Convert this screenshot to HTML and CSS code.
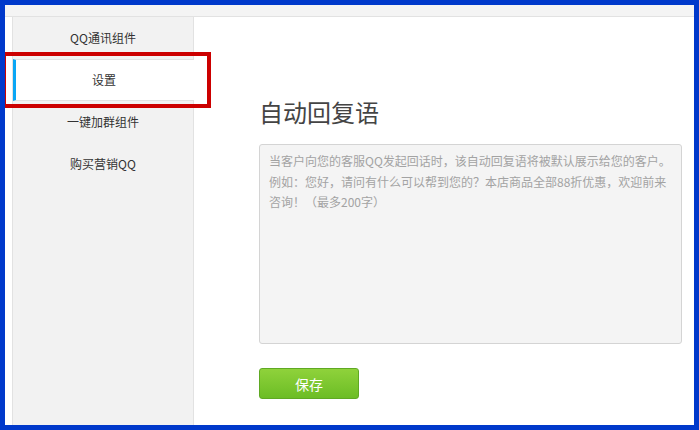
FILE: index.html
```html
<!DOCTYPE html>
<html lang="zh-CN">

<head>
  <meta charset="UTF-8" />
  <meta name="viewport" content="width=device-width, initial-scale=1.0" />
  <title>自动回复语设置</title>
  <link rel="stylesheet" href="styles.css">
</head>

<body>
  <div class="frame">
    <div class="topbar"></div>
    <div class="layout">
      <ul class="side-nav">
        <li>QQ通讯组件</li>
        <li class="active">设置</li>
        <li>一键加群组件</li>
        <li>购买营销QQ</li>
      </ul>
      <div class="main">
        <h2 class="main-title">自动回复语</h2>
        <textarea class="reply-box" placeholder="当客户向您的客服QQ发起回话时，该自动回复语将被默认展示给您的客户。例如：您好，请问有什么可以帮到您的？本店商品全部88折优惠，欢迎前来咨询！（最多200字）"></textarea>
        <button class="btn-save">保存</button>
      </div>
    </div>
    <div class="mark"></div>
  </div>
</body>

</html>
```

FILE: styles.css
```css
* {
  box-sizing: border-box;
}

body {
  margin: 0;
  font-family: "Noto Sans CJK SC", "Liberation Sans", sans-serif;
  color: #333;
}

.frame {
  width: 699px;
  height: 430px;
  border: 5px solid #0039cb;
  background: #fff;
  position: relative;
  overflow: hidden;
  display: flex;
  flex-direction: column;
}

.topbar {
  height: 12px;
  background: #f4f4f4;
  border-bottom: 1px solid #e2e2e2;
  flex-shrink: 0;
}

.layout {
  flex: 1;
  display: flex;
}

.side-nav {
  margin: 0 0 0 7px;
  padding: 0;
  list-style: none;
  width: 182px;
  background: #f2f2f2;
  border-left: 1px solid #e2e2e2;
  border-right: 1px solid #e2e2e2;
}

.side-nav li {
  height: 42px;
  line-height: 42px;
  text-align: center;
  font-size: 12px;
  color: #333;
  cursor: pointer;
}

.side-nav li.active {
  background: #fff;
  margin-right: -1px;
  border-top: 1px solid #e2e2e2;
  border-bottom: 1px solid #e2e2e2;
  border-left: 3px solid #0aa6f5;
  line-height: 40px;
  padding-right: 2px;
}

.main {
  flex: 1;
  padding: 79px 0 0 65px;
}

.main-title {
  margin: 0 0 16px;
  font-size: 24px;
  line-height: 32px;
  font-weight: normal;
  color: #444;
}

.reply-box {
  display: block;
  width: 423px;
  height: 200px;
  padding: 6px 9px;
  background: #f4f4f4;
  border: 1px solid #d4d4d4;
  border-radius: 3px;
  font-family: inherit;
  font-size: 12px;
  line-height: 20.5px;
  color: #555;
  resize: none;
  outline: none;
}

.reply-box::placeholder {
  color: #a3a3a3;
}

.btn-save {
  margin-top: 24px;
  width: 100px;
  height: 31px;
  border: 1px solid #5fa923;
  border-radius: 3px;
  background: linear-gradient(#8fd23b, #6cbd25);
  color: #fff;
  font-family: inherit;
  font-size: 14px;
  cursor: pointer;
}

/* annotation box */
.mark {
  position: absolute;
  left: -3px;
  top: 47px;
  width: 209px;
  height: 56px;
  border: 4px solid #cc0000;
}
```
